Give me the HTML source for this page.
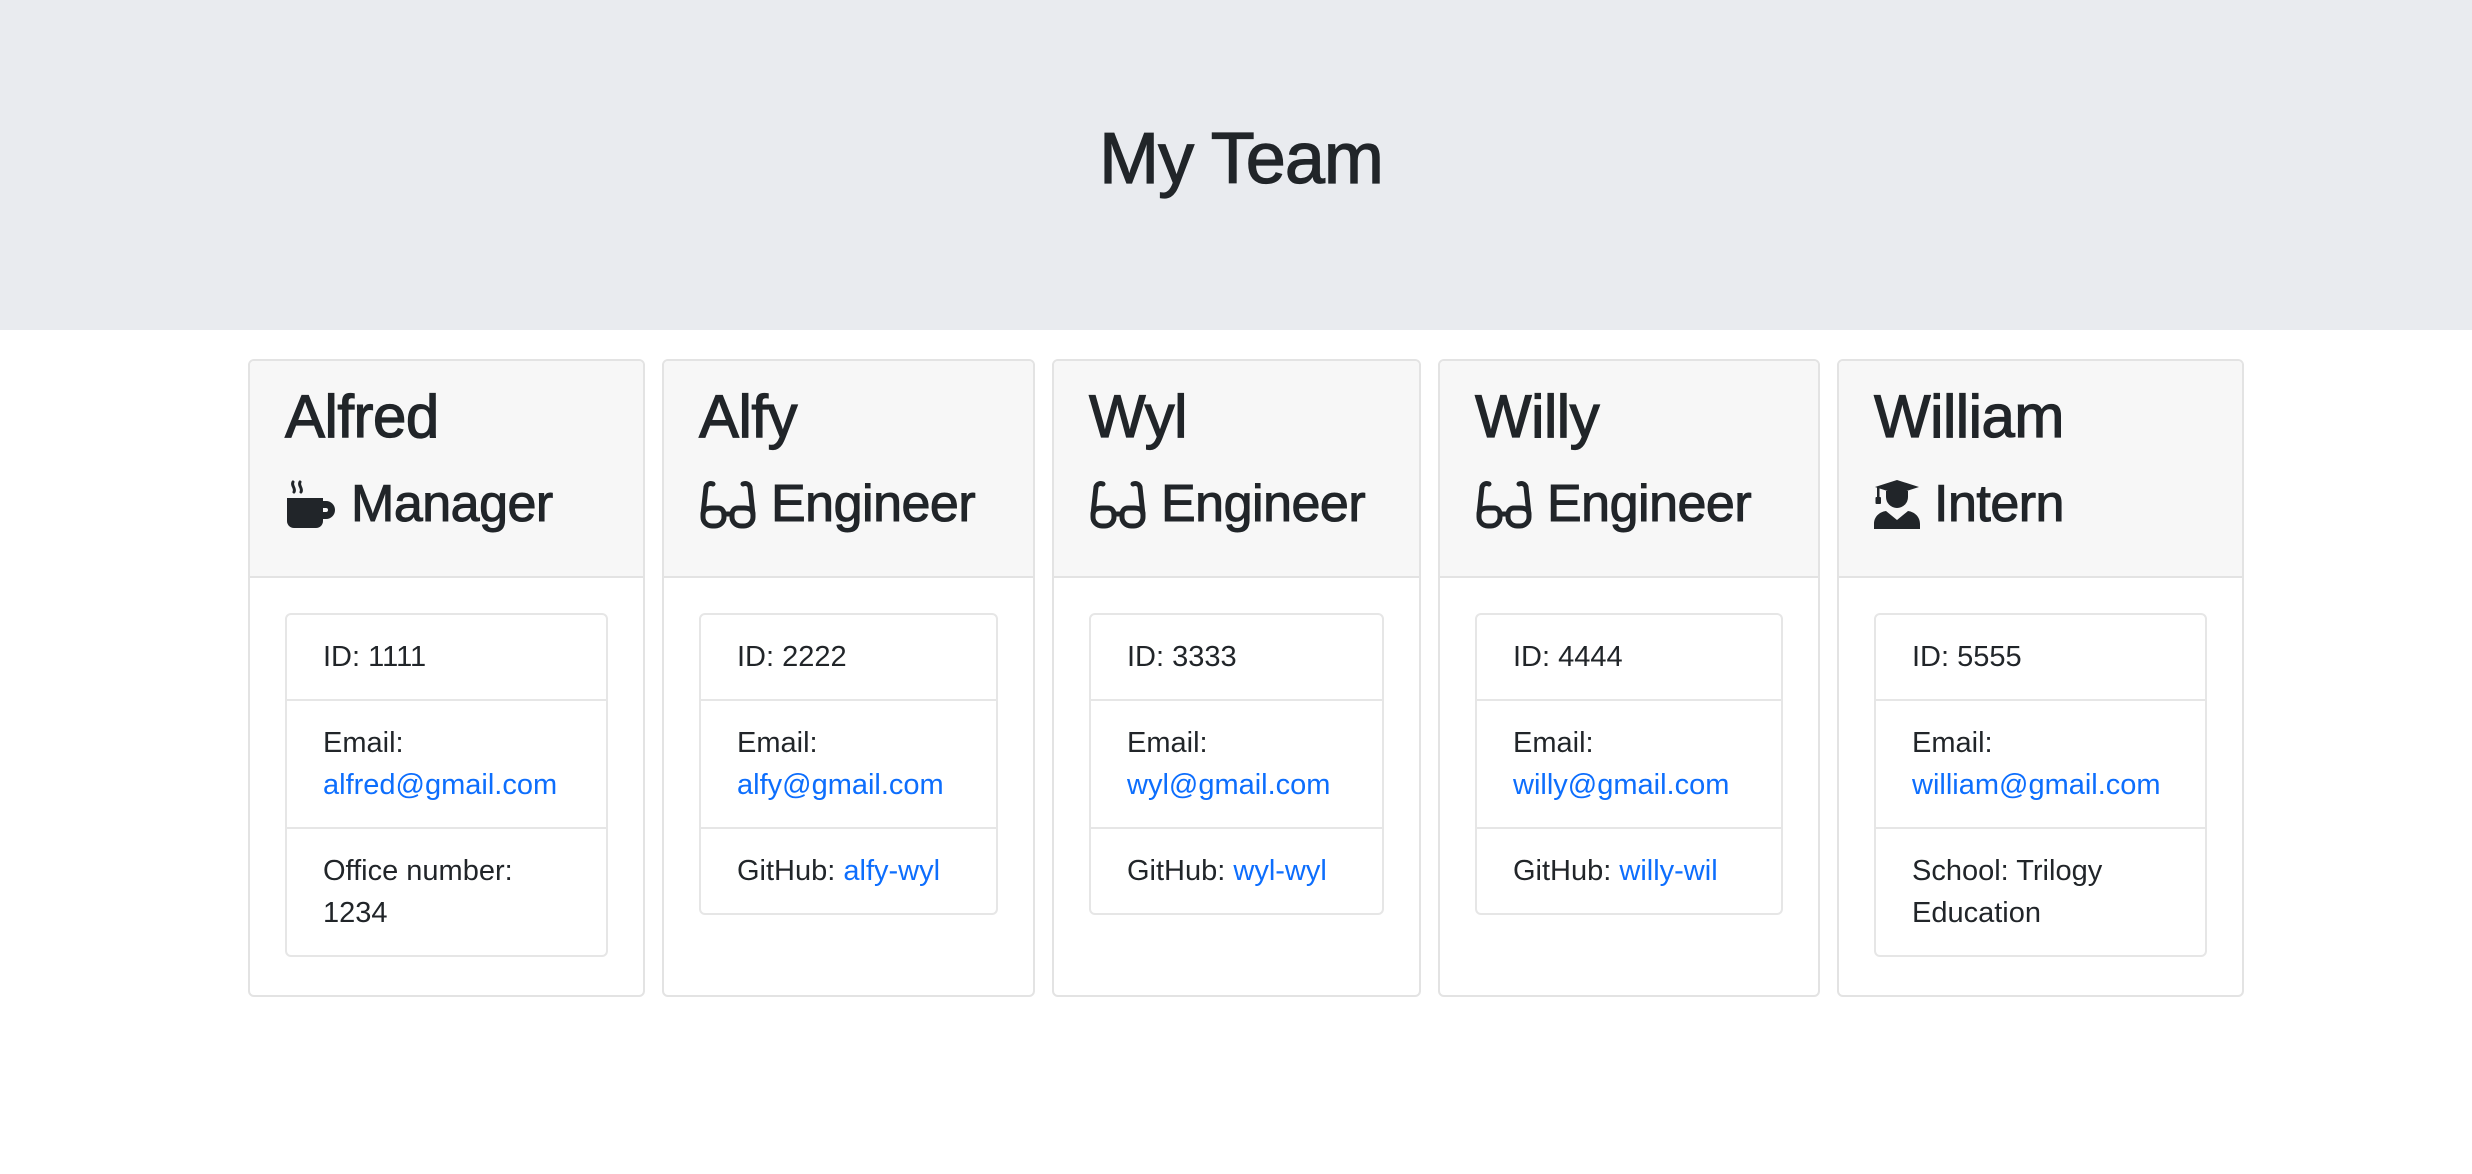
<!DOCTYPE html>
<html><head><meta charset="utf-8"><style>
*{box-sizing:border-box;margin:0;padding:0}
body{width:2472px;height:1174px;background:#fff;font-family:"Liberation Sans",Helvetica,Arial,sans-serif;color:#212529;position:relative;overflow:hidden}
.jum{position:absolute;left:0;top:0;width:2472px;height:330px;background:#e9ebef}
.jum h1{position:absolute;left:10px;right:0;top:114px;text-align:center;font-size:72px;font-weight:400;line-height:90px;letter-spacing:-1px;-webkit-text-stroke:1.2px #212529}
.card{position:absolute;top:359px;height:638px;border:2px solid #e3e3e3;border-radius:6px;overflow:hidden}
.hd{height:217px;background:#f7f7f7;border-bottom:2px solid #e3e3e3;padding:20px 0 0 35px}
.nm{font-size:60px;font-weight:400;line-height:72px;height:90px;letter-spacing:-0.5px;-webkit-text-stroke:1.2px #212529}
.rl{font-size:52px;font-weight:400;line-height:66px;display:flex;align-items:center;letter-spacing:-0.5px;-webkit-text-stroke:1px #212529}
.rl svg{margin-right:14px}
.ls{position:absolute;left:35px;right:35px;top:252px;border:2px solid #e6e6e6;border-radius:6px}
.it{padding:21px 0 21px 36px;font-size:29px;line-height:42px;border-top:2px solid #e6e6e6}
.it:first-child{border-top:none}
a{color:#0d6efd;text-decoration:none}
</style></head><body>
<div class="jum"><h1>My Team</h1></div>

<div class="card" style="left:248px;width:397px">
<div class="hd"><div class="nm">Alfred</div>
<div class="rl"><svg width="52" height="52" viewBox="0 0 52 52"><path d="M8 4c-2 4 3 6 1 10M15 4c-2 4 3 6 1 10" stroke="#212529" stroke-width="3" fill="none" stroke-linecap="round"/><path d="M2 20h36v23a7 7 0 0 1-7 7H9a7 7 0 0 1-7-7z" fill="#212529"/><path d="M37 23h4a9 9 0 0 1 0 18h-4v-7h4a2 2 0 0 0 0-4h-4z" fill="#212529"/></svg>Manager</div></div>
<div class="ls"><div class="it">ID: 1111</div><div class="it">Email:<br><a>alfred@gmail.com</a></div><div class="it">Office number:<br>1234</div></div>
</div>

<div class="card" style="left:662px;width:373px">
<div class="hd"><div class="nm">Alfy</div>
<div class="rl"><svg width="58" height="52" viewBox="0 0 58 52"><g stroke="#212529" stroke-width="5" fill="none" stroke-linecap="round"><path d="M14 6a5 5 0 0 0-7 3L4 37"/><path d="M44 6a5 5 0 0 1 7 3l3 28"/><path d="M4 36c0-4 4-6 9-6h6c4 0 6 3 6 7v2c0 5-4 9-9 9h-3c-5 0-9-4-9-9z"/><path d="M54 36c0-4-4-6-9-6h-6c-4 0-6 3-6 7v2c0 5 4 9 9 9h3c5 0 9-4 9-9z"/><path d="M25 36h8"/></g></svg>Engineer</div></div>
<div class="ls"><div class="it">ID: 2222</div><div class="it">Email:<br><a>alfy@gmail.com</a></div><div class="it">GitHub: <a>alfy-wyl</a></div></div>
</div>

<div class="card" style="left:1052px;width:369px">
<div class="hd"><div class="nm">Wyl</div>
<div class="rl"><svg width="58" height="52" viewBox="0 0 58 52"><g stroke="#212529" stroke-width="5" fill="none" stroke-linecap="round"><path d="M14 6a5 5 0 0 0-7 3L4 37"/><path d="M44 6a5 5 0 0 1 7 3l3 28"/><path d="M4 36c0-4 4-6 9-6h6c4 0 6 3 6 7v2c0 5-4 9-9 9h-3c-5 0-9-4-9-9z"/><path d="M54 36c0-4-4-6-9-6h-6c-4 0-6 3-6 7v2c0 5 4 9 9 9h3c5 0 9-4 9-9z"/><path d="M25 36h8"/></g></svg>Engineer</div></div>
<div class="ls"><div class="it">ID: 3333</div><div class="it">Email:<br><a>wyl@gmail.com</a></div><div class="it">GitHub: <a>wyl-wyl</a></div></div>
</div>

<div class="card" style="left:1438px;width:382px">
<div class="hd"><div class="nm">Willy</div>
<div class="rl"><svg width="58" height="52" viewBox="0 0 58 52"><g stroke="#212529" stroke-width="5" fill="none" stroke-linecap="round"><path d="M14 6a5 5 0 0 0-7 3L4 37"/><path d="M44 6a5 5 0 0 1 7 3l3 28"/><path d="M4 36c0-4 4-6 9-6h6c4 0 6 3 6 7v2c0 5-4 9-9 9h-3c-5 0-9-4-9-9z"/><path d="M54 36c0-4-4-6-9-6h-6c-4 0-6 3-6 7v2c0 5 4 9 9 9h3c5 0 9-4 9-9z"/><path d="M25 36h8"/></g></svg>Engineer</div></div>
<div class="ls"><div class="it">ID: 4444</div><div class="it">Email:<br><a>willy@gmail.com</a></div><div class="it">GitHub: <a>willy-wil</a></div></div>
</div>

<div class="card" style="left:1837px;width:407px">
<div class="hd"><div class="nm">William</div>
<div class="rl"><svg width="46" height="52" viewBox="0 0 46 52"><g fill="#212529"><path d="M23 2L45 9 23 16 1 9z"/><rect x="3" y="9" width="2.5" height="12"/><rect x="1.5" y="19" width="5.5" height="7" rx="1"/><path d="M12 13h22v6a11 11 0 0 1-22 0z"/><path d="M0 51v-5c0-7 5-12 12-13l11 9 11-9c7 1 12 6 12 13v5z"/></g></svg>Intern</div></div>
<div class="ls"><div class="it">ID: 5555</div><div class="it">Email:<br><a>william@gmail.com</a></div><div class="it">School: Trilogy<br>Education</div></div>
</div>
</body></html>
